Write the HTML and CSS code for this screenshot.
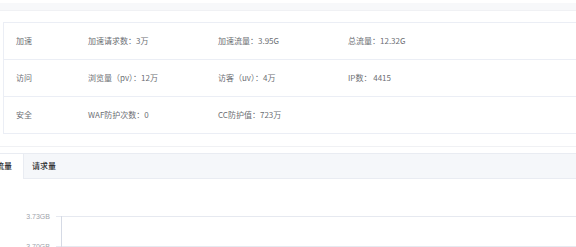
FILE: index.html
```html
<!DOCTYPE html>
<html lang="zh">
<head>
<meta charset="utf-8">
<link rel="stylesheet" href="styles.css">
</head>
<body>
<div class="page">
  <div class="topband"></div>
  <table class="stats">
    <tr>
      <td class="c1">加速</td>
      <td class="c2">加速请求数：3万</td>
      <td class="c3">加速流量：3.95G</td>
      <td class="c4">总流量：12.32G</td>
    </tr>
    <tr>
      <td class="c1">访问</td>
      <td class="c2">浏览量（pv）：12万</td>
      <td class="c3">访客（uv）：4万</td>
      <td class="c4">IP数： 4415</td>
    </tr>
    <tr>
      <td class="c1">安全</td>
      <td class="c2">WAF防护次数：0</td>
      <td class="c3">CC防护值：723万</td>
      <td class="c4"></td>
    </tr>
  </table>
  <div class="card">
    <div class="tabs">
      <div class="tab active">流量</div>
      <div class="tab">请求量</div>
    </div>
    <div class="chart">
      <svg width="600" height="70" viewBox="0 0 600 70">
        <text x="50" y="40" class="axis-label" text-anchor="end">3.73GB</text>
        <text x="50" y="70" class="axis-label" text-anchor="end">3.70GB</text>
        <line x1="56" y1="37.5" x2="600" y2="37.5" class="grid"/>
        <line x1="56" y1="67.5" x2="600" y2="67.5" class="grid"/>
        <line x1="61.5" y1="37" x2="61.5" y2="70" class="axis"/>
      </svg>
    </div>
  </div>
</div>
</body>
</html>
```
FILE: styles.css
```css
html, body {
  margin: 0;
  padding: 0;
  background: #fff;
  overflow: hidden;
}
body {
  font-family: "Noto Sans CJK SC", "Liberation Sans", sans-serif;
  color: #606266;
}
.page {
  width: 576px;
  padding-top: 3px;
}
.topband {
  height: 7px;
  background: #f7f8fa;
  border-bottom: 1px solid #f0f1f4;
}
.stats {
  margin: 11px 0 0 3px;
  width: 600px;
  border-collapse: collapse;
  border: 1px solid #ebeef5;
  table-layout: fixed;
}
.stats td {
  height: 36px;
  padding: 0 0 0 12px;
  font-size: 8px;
  line-height: 10px;
  font-weight: 400;
  border-bottom: 1px solid #ebeef5;
  white-space: nowrap;
  color: #6c6e73;
}
.stats .c1 { width: 60px; }
.stats .c2 { width: 118px; }
.stats .c3 { width: 118px; }
.card {
  margin-top: 12px;
  margin-left: -4px;
  width: 600px;
  border-top: 1px solid #f0f1f4;
  padding-top: 6px;
}
.tabs {
  display: flex;
  height: 24px;
  background: #f5f7fa;
  border-top: 1px solid #e9ecf2;
  border-bottom: 1px solid #e9ecf2;
}
.tab {
  font-size: 8px;
  line-height: 24px;
  padding: 0 9px 0 0;
  color: #303133;
  font-weight: 500;
}
.tab.active {
  background: #fff;
  width: 18px;
  padding-left: 0;
  padding-right: 9px;
  margin-bottom: -1px;
  border-right: 1px solid #e9ecf2;
}
.tab + .tab {
  padding-left: 8px;
}
.chart {
  margin-left: 4px;
}
.chart svg {
  display: block;
}
.axis-label {
  font-family: "Liberation Sans", sans-serif;
  font-size: 7px;
  fill: #a0a4ab;
}
.grid {
  stroke: #e6e9f0;
  stroke-width: 1;
}
.axis {
  stroke: #d5dae5;
  stroke-width: 1;
}
```
